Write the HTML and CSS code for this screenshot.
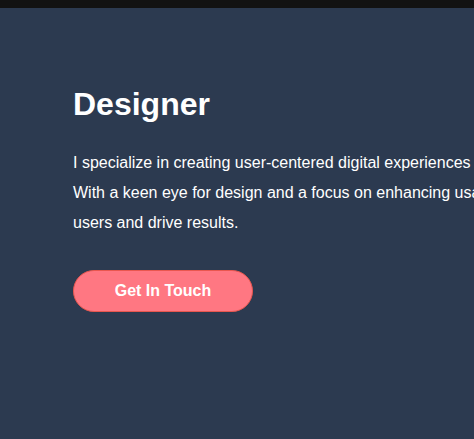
FILE: index.html
```html
<!DOCTYPE html>
<html lang="en">
<head>
<meta charset="utf-8">
<title>Designer</title>
<link rel="stylesheet" href="styles.css">
</head>
<body>
<div class="topbar"></div>
<section class="hero">
  <div class="hero-content">
    <h1 class="hero-title">Designer</h1>
    <p class="hero-text">I specialize in creating user-centered digital experiences that are intuitive, accessible, and engaging.<br>With a keen eye for design and a focus on enhancing usability, I craft interfaces that delight<br>users and drive results.</p>
    <a class="hero-button" href="#">Get In Touch</a>
  </div>
</section>
</body>
</html>
```
FILE: styles.css
```css
html, body {
  margin: 0;
  padding: 0;
  height: 100%;
  overflow: hidden;
}
body {
  background: #2c3a50;
  font-family: "Liberation Sans", Arial, sans-serif;
  color: #ffffff;
}
.topbar {
  height: 8px;
  background: #121212;
}
.hero {
  padding: 76px 0 0 73px;
}
.hero-content {
  display: flex;
  flex-direction: column;
  align-items: flex-start;
}
.hero-title {
  margin: 0;
  font-size: 32px;
  font-weight: 700;
  line-height: 40px;
}
.hero-text {
  margin: 24px 0 0;
  font-size: 16px;
  line-height: 30px;
  white-space: nowrap;
}
.hero-button {
  margin-top: 32px;
  box-sizing: border-box;
  width: 180px;
  height: 42px;
  display: flex;
  align-items: center;
  justify-content: center;
  background: #ff7782;
  border: 1px solid #e9574f;
  border-radius: 21px;
  color: #ffffff;
  font-size: 16px;
  font-weight: 700;
  text-decoration: none;
}
```
